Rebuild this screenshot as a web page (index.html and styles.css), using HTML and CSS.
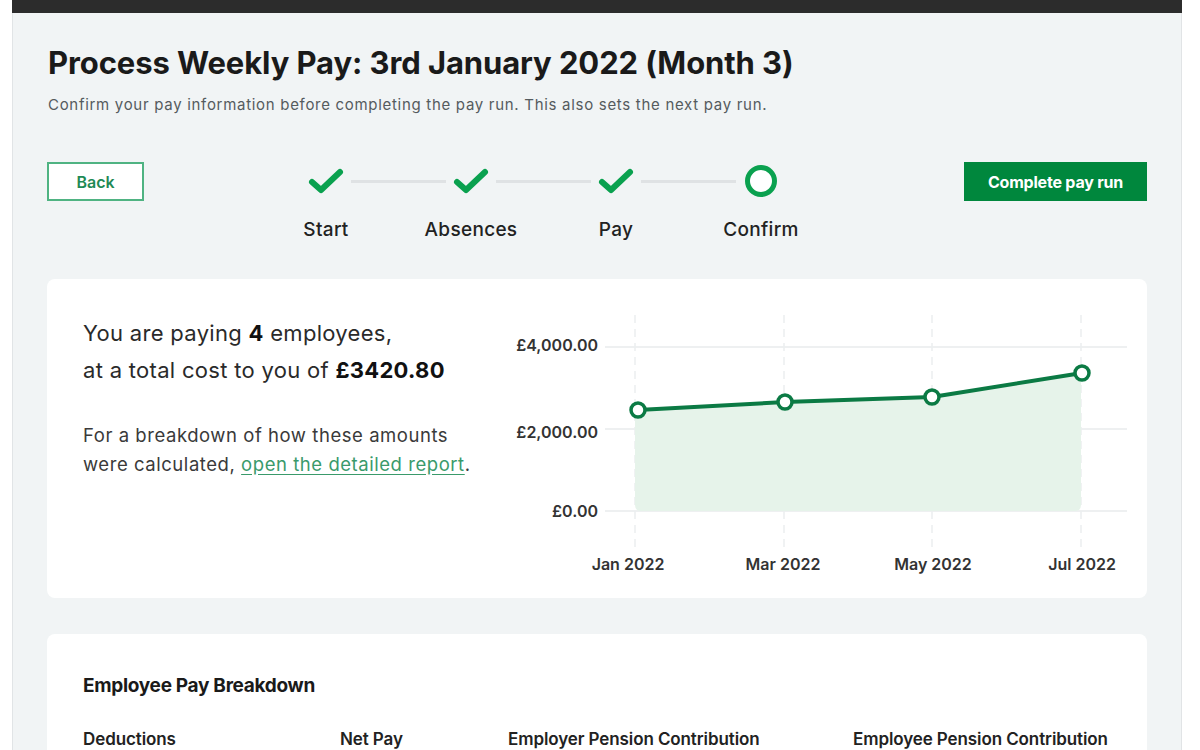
FILE: index.html
```html
<!DOCTYPE html>
<html lang="en">
<head>
    <meta charset="UTF-8">
    <meta name="viewport" content="width=device-width, initial-scale=1.0">
    <title>Process Weekly Pay</title>
    <link rel="stylesheet" href="styles.css">
</head>
<body>
    <div class="app">
        <div class="topbar"></div>

        <div class="panel">
            <h1>Process Weekly Pay: 3rd January 2022 (Month 3)</h1>
            <p class="subtitle">Confirm your pay information before completing the pay run. This also sets the next pay run.</p>

            <div class="actions">
                <button class="btn-back">Back</button>

                <div class="stepper">
                    <div class="step">
                        <svg class="step-icon" viewBox="0 0 40 32" width="40" height="32"><path d="M6 17 L15 25 L34 7" fill="none" stroke="#0aa14f" stroke-width="6" stroke-linecap="round" stroke-linejoin="round"/></svg>
                        <span class="step-label">Start</span>
                    </div>
                    <div class="step-line"></div>
                    <div class="step">
                        <svg class="step-icon" viewBox="0 0 40 32" width="40" height="32"><path d="M6 17 L15 25 L34 7" fill="none" stroke="#0aa14f" stroke-width="6" stroke-linecap="round" stroke-linejoin="round"/></svg>
                        <span class="step-label">Absences</span>
                    </div>
                    <div class="step-line"></div>
                    <div class="step">
                        <svg class="step-icon" viewBox="0 0 40 32" width="40" height="32"><path d="M6 17 L15 25 L34 7" fill="none" stroke="#0aa14f" stroke-width="6" stroke-linecap="round" stroke-linejoin="round"/></svg>
                        <span class="step-label">Pay</span>
                    </div>
                    <div class="step-line"></div>
                    <div class="step">
                        <svg class="step-icon" viewBox="0 0 40 32" width="40" height="32"><circle cx="20" cy="16" r="13.5" fill="#fff" stroke="#0aa14f" stroke-width="5"/></svg>
                        <span class="step-label">Confirm</span>
                    </div>
                </div>

                <button class="btn-complete">Complete pay run</button>
            </div>

            <div class="card summary">
                <div class="summary-text">
                    <p class="lead">You are paying <strong>4</strong> employees,<br>at a total cost to you of <strong>£3420.80</strong></p>
                    <p class="note">For a breakdown of how these amounts<br>were calculated, <a href="#">open the detailed report</a>.</p>
                </div>

                <svg class="chart" width="650" height="300" viewBox="0 0 650 300">
                    <!-- horizontal grid -->
                    <g stroke="#eef0f1" stroke-width="2">
                        <line x1="115" y1="58" x2="637" y2="58"/>
                        <line x1="115" y1="140" x2="637" y2="140"/>
                        <line x1="115" y1="222" x2="637" y2="222"/>
                    </g>
                    <!-- vertical grid -->
                    <g stroke="#eceeef" stroke-width="1.5" stroke-dasharray="8 6">
                        <line x1="145" y1="26" x2="145" y2="258"/>
                        <line x1="294" y1="26" x2="294" y2="258"/>
                        <line x1="442" y1="26" x2="442" y2="258"/>
                        <line x1="591" y1="26" x2="591" y2="258"/>
                    </g>
                    <path d="M145 121 L294 113 L442 108 L591 84 L591 216 Q591 222 585 222 L151 222 Q145 222 145 216 Z" fill="#e6f3ea"/>
                    <polyline points="148,121 295,113 442,108 592,84" fill="none" stroke="#0b7a44" stroke-width="4" stroke-linejoin="round"/>
                    <g fill="#fff" stroke="#0b7a44" stroke-width="3.5">
                        <circle cx="148" cy="121" r="7"/>
                        <circle cx="295" cy="113" r="7"/>
                        <circle cx="442" cy="108" r="7"/>
                        <circle cx="592" cy="84" r="7"/>
                    </g>
                    <g class="axis" text-anchor="end">
                        <text x="108" y="62">£4,000.00</text>
                        <text x="108" y="149">£2,000.00</text>
                        <text x="108" y="228">£0.00</text>
                    </g>
                    <g class="axis" text-anchor="middle">
                        <text x="138" y="281">Jan 2022</text>
                        <text x="293" y="281">Mar 2022</text>
                        <text x="443" y="281">May 2022</text>
                        <text x="592" y="281">Jul 2022</text>
                    </g>
                </svg>
            </div>

            <div class="card breakdown">
                <h3>Employee Pay Breakdown</h3>
                <div class="breakdown-head">
                    <span>Deductions</span>
                    <span>Net Pay</span>
                    <span>Employer Pension Contribution</span>
                    <span>Employee Pension Contribution</span>
                </div>
            </div>
        </div>
    </div>
</body>
</html>
```

FILE: styles.css
```css
/* Colours */
:root {
    --green: #00873d;
    --check: #0aa14f;
    --text: #1a1a1a;
    --muted: #555b5e;
    --panel: #f1f4f5;
}

body {
    margin: 0;
    background-color: #fff;
    font-family: 'Inter', 'Noto Sans', sans-serif;
    color: var(--text);
    overflow: hidden;
}

.app {
    margin: 0 12px;
    width: 1170px;
}

.topbar {
    height: 13px;
    background-color: #2c2c2c;
}

.panel {
    background-color: var(--panel);
    border-left: 1px solid #e1e4e6;
    border-right: 1px solid #e1e4e6;
    padding: 32px 34px 40px;
    min-height: 900px;
}

h1 {
    font-size: 31px;
    font-weight: 700;
    margin: 0 0 0 1px;
    line-height: 36px;
    letter-spacing: -0.1px;
}

.subtitle {
    font-size: 15px;
    letter-spacing: 0.7px;
    color: var(--muted);
    margin: 14px 0 0 1px;
}

.actions {
    display: flex;
    align-items: flex-start;
    margin-top: 48px;
}

.btn-back {
    width: 97px;
    height: 39px;
    background-color: #fff;
    border: 2px solid #4fb382;
    color: #1f8a55;
    font-family: inherit;
    font-size: 16px;
    font-weight: 600;
    cursor: pointer;
}

.stepper {
    display: flex;
    align-items: flex-start;
    margin-left: 152px;
    margin-top: 3px;
}

.step {
    width: 60px;
    display: flex;
    flex-direction: column;
    align-items: center;
}

.step-label {
    margin-top: 21px;
    font-size: 19px;
    font-weight: 500;
    letter-spacing: 0.3px;
    white-space: nowrap;
    color: #222;
}

.step-line {
    width: 95px;
    height: 3px;
    background-color: #dfe2e4;
    margin: 15px -5px 0;
}

.btn-complete {
    margin-left: auto;
    width: 183px;
    height: 39px;
    background-color: var(--green);
    border: none;
    color: #fff;
    font-family: inherit;
    font-size: 16px;
    font-weight: 700;
    letter-spacing: -0.2px;
    cursor: pointer;
}

.card {
    background-color: #fff;
    border-radius: 8px;
}

.summary {
    display: flex;
    margin-top: 38px;
    padding: 10px 7px 9px 36px;
}

.summary-text {
    flex: 1;
    padding-top: 26px;
}

.lead {
    margin: 0;
    font-size: 22px;
    line-height: 37px;
    letter-spacing: 0.3px;
    color: #2a2a2a;
}

.lead strong {
    font-weight: 700;
    color: #111;
}

.note {
    margin: 32px 0 0;
    font-size: 18.5px;
    line-height: 29px;
    letter-spacing: 0.55px;
    color: #3a3a3a;
}

.note a {
    color: #3a9a6b;
    text-decoration: underline;
    text-underline-offset: 3px;
}

.chart .axis text {
    font-family: 'Inter', 'Noto Sans', sans-serif;
    font-size: 16px;
    font-weight: 600;
    fill: #333;
}

.breakdown {
    margin-top: 36px;
    padding: 40px 36px 30px;
    min-height: 200px;
}

.breakdown h3 {
    margin: 0;
    font-size: 19px;
    font-weight: 700;
    letter-spacing: -0.3px;
}

.breakdown-head {
    display: grid;
    grid-template-columns: 257px 168px 345px 1fr;
    margin-top: 32px;
    font-size: 17px;
    font-weight: 600;
    letter-spacing: -0.1px;
    color: #222;
}
```
